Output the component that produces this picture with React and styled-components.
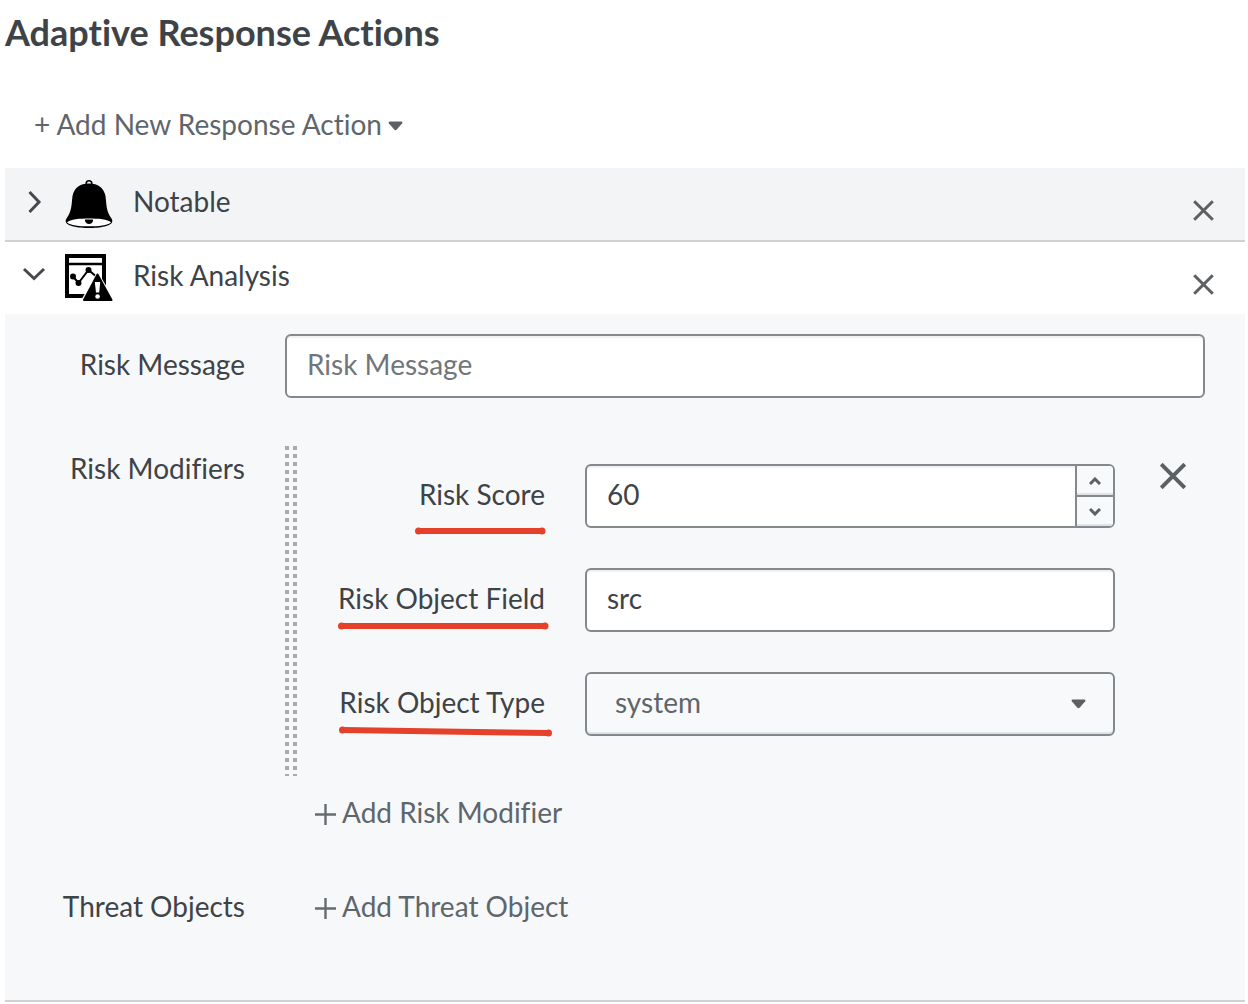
import React, { useState } from "react";
import styled, { createGlobalStyle, css } from "styled-components";

const GlobalStyle = createGlobalStyle`
  *, *::before, *::after { box-sizing: border-box; }
  body {
    margin: 0;
    background: #ffffff;
    color: #3e4347;
    font-family: Lato, "Liberation Sans", sans-serif;
    font-size: 28px;
    line-height: 36px;
    font-variant-ligatures: none;
  }
  button, input, select { font: inherit; font-variant-ligatures: none; color: inherit; margin: 0; }
`;

const Page = styled.main`
  padding: 12px 3px 0 5px;
`;

const Title = styled.h1`
  margin: 0;
  font-size: 36px;
  line-height: 40px;
  font-weight: 700;
`;

const AddActionButton = styled.button`
  display: flex;
  align-items: center;
  gap: 6px;
  margin: 54px 0 26px 29px;
  padding: 0;
  border: 0;
  background: none;
  color: #5f666b;
  cursor: pointer;
  & > svg { margin-top: 4px; }
`;

const ActionHeader = styled.div`
  display: flex;
  align-items: flex-start;
  height: ${(p) => (p.$open ? "72px" : "74px")};
  padding: 0 20px 0 12px;
  background: ${(p) => (p.$open ? "#ffffff" : "#f2f4f5")};
  border-bottom: ${(p) => (p.$open ? "0" : "2px solid #cfd1d3")};
`;

const ToggleButton = styled.button`
  display: flex;
  align-items: center;
  flex: 1;
  height: 72px;
  padding: 0;
  border: 0;
  background: none;
  text-align: left;
  cursor: pointer;
`;

const ChevronIcon = styled.svg`
  width: 34px;
  height: 34px;
  margin: 0 14px 4px 0;
  fill: none;
  stroke: #45494d;
  stroke-width: 3;
`;

const ActionIcon = styled.svg`
  width: 48px;
  height: 48px;
  margin-right: 20px;
`;

const ActionName = styled.span`
  padding-bottom: 6px;
`;

const RemoveButton = styled.button`
  display: grid;
  place-items: center;
  width: 44px;
  height: 44px;
  margin-top: 20px;
  padding: 0;
  border: 0;
  background: none;
  cursor: pointer;
`;

const Panel = styled.section`
  display: grid;
  grid-template-columns: 240px minmax(0, 1fr);
  gap: 40px;
  padding: 20px 40px 60px 0;
  background: #f7f8fa;
  border-bottom: 2px solid #cfd1d3;
`;

const labelText = css`
  line-height: 60px;
  text-align: right;
  white-space: nowrap;
`;

const Label = styled.label`
  ${labelText}
`;

const GroupLabel = styled.div`
  ${labelText}
`;

const TextInput = styled.input`
  display: block;
  width: 100%;
  min-width: 0;
  height: 64px;
  padding: 0 20px 4px;
  border: 2px solid #84898e;
  border-radius: 6px;
  background: #ffffff;
  box-shadow: inset 0 2px 1px #f0f1f3;
  &::placeholder { color: #70767c; opacity: 1; }
`;

const ModifierGroup = styled.div`
  display: flex;
  align-items: flex-start;
  margin-top: 8px;
`;

const DragHandle = styled.div`
  align-self: stretch;
  width: 12px;
  background: conic-gradient(at 4px 4px, transparent 270deg, #a9abae 0) 0 0 / 8px 8px;
`;

const ModifierFields = styled.div`
  display: grid;
  flex: 1;
  min-width: 0;
  gap: 40px;
  padding: 18px 0 40px;
`;

const Field = styled.div`
  display: grid;
  grid-template-columns: 248px minmax(0, 1fr);
  gap: 40px;
  height: 64px;
`;

const Marked = styled.span`
  position: relative;
  display: inline-block;
  line-height: 36px;
`;

const Underline = styled.svg`
  position: absolute;
  right: -8px;
  top: ${(p) => p.$top}px;
  overflow: visible;
  fill: #e5402a;
  stroke: #e5402a;
  stroke-width: 6;
`;

const NumberBox = styled.div`
  display: flex;
  height: 64px;
  border: 2px solid #84898e;
  border-radius: 6px;
  background: #ffffff;
  box-shadow: inset 0 2px 1px #f0f1f3;
  overflow: hidden;
`;

const NumberInput = styled.input`
  flex: 1;
  min-width: 0;
  padding: 0 20px 4px;
  border: 0;
  background: transparent;
  appearance: textfield;
  &::-webkit-inner-spin-button { appearance: none; margin: 0; }
`;

const Stepper = styled.div`
  display: grid;
  grid-template-rows: 29px 1fr;
  width: 38px;
  border-left: 2px solid #84898e;
`;

const StepButton = styled.button`
  display: grid;
  place-items: center;
  padding: 0;
  border: 0;
  background: #f7f9fb;
  box-shadow: inset 0 -2px 0 #dfe3e7;
  cursor: pointer;
  & + & { border-top: 2px solid #84898e; }
`;

const SelectBox = styled.div`
  display: grid;
  align-items: center;
  & > * { grid-area: 1 / 1; }
  & > svg { justify-self: end; margin-right: 29px; pointer-events: none; }
`;

const Select = styled.select`
  width: 100%;
  height: 64px;
  padding: 0 60px 4px 28px;
  border: 2px solid #84898e;
  border-radius: 6px;
  background: #f7f9fb;
  box-shadow: inset 0 -2px 0 #dfe3e7;
  color: #5f666b;
  appearance: none;
`;

const RemoveModifier = styled(RemoveButton)`
  width: 52px;
  height: 52px;
  margin: 4px 6px 0 32px;
`;

const AddLink = styled.button`
  display: flex;
  align-items: center;
  gap: 6px;
  height: ${(p) => p.$height}px;
  margin: ${(p) => p.$gap}px 0 0 30px;
  padding: 0 0 4px;
  border: 0;
  background: none;
  color: #5f666b;
  cursor: pointer;
  & > svg { margin-top: 5px; }
`;

function Cross({ size, weight }) {
  return (
    <svg width={size} height={size} viewBox={`0 0 ${size} ${size}`} stroke="#5c6063" strokeWidth={weight} aria-hidden="true">
      <path d={`M1.2 1.2 L${size - 1.2} ${size - 1.2} M${size - 1.2} 1.2 L1.2 ${size - 1.2}`} />
    </svg>
  );
}

function Caret() {
  return (
    <svg width="15" height="10" viewBox="0 0 15 10" fill="#5c6063" aria-hidden="true">
      <path d="M1.5 0.5H13.5Q15 0.8 14.2 2.2L8.8 8.6Q7.5 9.9 6.2 8.6L0.8 2.2Q0 0.8 1.5 0.5Z" />
    </svg>
  );
}

function Plus() {
  return (
    <svg width="21" height="21" viewBox="0 0 21 21" stroke="#666b6f" strokeWidth="2.4" aria-hidden="true">
      <path d="M10.5 0V21M0 10.5H21" />
    </svg>
  );
}

function Stroke({ top, width, x1, x2, slope = 0 }) {
  return (
    <Underline $top={top} width={width} height="6" aria-hidden="true">
      <path d={`M${x1} 3L${x2} ${3 + slope}`} />
      <circle cx={x1} cy="3" r="3.5" stroke="none" />
      <circle cx={x2} cy={3 + slope} r="3.5" stroke="none" />
    </Underline>
  );
}

function BellIcon() {
  return (
    <ActionIcon viewBox="0 0 48 48" aria-hidden="true">
      <circle cx="24" cy="3.6" r="2.8" fill="none" stroke="#000" strokeWidth="1.6" />
      <path d="M24 3.5C33 3.5 39 8 40.5 16C41.5 24 41 31 46.5 38.500C51 46 36 48 24 48S-3 46 1.500 38.500C7 31 6.500 24 7.500 16C9 8 15 3.500 24 3.500Z" />
      <path d="M2 42.500C5 39 15 38.500 24 38.500S43 39 46 42.500C43 45.500 33 46.300 24 46.300S5 45.500 2 42.500Z" fill="#fff" />
      <path d="M20 39.500H28V41Q27 44 24 44T20 41Z" />
    </ActionIcon>
  );
}

function RiskIcon() {
  return (
    <ActionIcon viewBox="0 0 48 48" aria-hidden="true">
      <rect x="2" y="2" width="37" height="40" fill="#fff" stroke="#000" strokeWidth="4" />
      <path d="M2 10H39" stroke="#000" strokeWidth="2.5" />
      <path d="M8 22.5L13.5 29L23.5 16L33 24" fill="none" stroke="#000" strokeWidth="2" />
      <circle cx="8" cy="22.5" r="3" />
      <circle cx="13.5" cy="29" r="3" />
      <circle cx="23.5" cy="16" r="3" />
      <path d="M32.5 21L47.5 47H18Z" stroke="#fff" strokeWidth="4" strokeLinejoin="round" />
      <path d="M32.5 20.5L46.5 46H19Z" stroke="#000" strokeWidth="2" strokeLinejoin="round" />
      <path d="M29.800 28H35.200L34.200 38.500H31Z" fill="#fff" />
      <circle cx="32.600" cy="42.500" r="2.300" fill="#fff" />
    </ActionIcon>
  );
}

export default function App() {
  const [score, setScore] = useState(60);
  return (
    <>
      <GlobalStyle />
      <Page>
        <Title>Adaptive Response Actions</Title>
        <AddActionButton type="button">
          <span>+ Add New Response Action</span>
          <Caret />
        </AddActionButton>

        <ActionHeader>
          <ToggleButton type="button" aria-expanded="false">
            <ChevronIcon viewBox="0 0 34 34"><path d="M12.5 7L22 17L12.5 27" /></ChevronIcon>
            <BellIcon />
            <ActionName>Notable</ActionName>
          </ToggleButton>
          <RemoveButton type="button" aria-label="Remove Notable"><Cross size={21} weight={3} /></RemoveButton>
        </ActionHeader>

        <ActionHeader $open>
          <ToggleButton type="button" aria-expanded="true">
            <ChevronIcon viewBox="0 0 34 34"><path d="M7 10L17 19.5L27 10" /></ChevronIcon>
            <RiskIcon />
            <ActionName>Risk Analysis</ActionName>
          </ToggleButton>
          <RemoveButton type="button" aria-label="Remove Risk Analysis"><Cross size={21} weight={3} /></RemoveButton>
        </ActionHeader>

        <Panel>
          <Label htmlFor="risk-message">Risk Message</Label>
          <TextInput id="risk-message" placeholder="Risk Message" />

          <GroupLabel id="modifiers-label">Risk Modifiers</GroupLabel>
          <div role="group" aria-labelledby="modifiers-label">
            <ModifierGroup>
              <DragHandle />
              <ModifierFields>
                <Field>
                  <Label htmlFor="risk-score">
                    <Marked>
                      Risk Score
                      <Stroke top={52} width={138} x1={3.5} x2={127} />
                    </Marked>
                  </Label>
                  <NumberBox>
                    <NumberInput id="risk-score" type="number" value={score} onChange={(e) => setScore(Number(e.target.value))} />
                    <Stepper>
                      <StepButton type="button" aria-label="Increase score" onClick={() => setScore(score + 1)}>
                        <svg width="12" height="8" viewBox="0 0 12 8" fill="none" stroke="#5c6063" strokeWidth="3"><path d="M1 7L6 2L11 7" /></svg>
                      </StepButton>
                      <StepButton type="button" aria-label="Decrease score" onClick={() => setScore(score - 1)}>
                        <svg width="12" height="8" viewBox="0 0 12 8" fill="none" stroke="#5c6063" strokeWidth="3"><path d="M1 1L6 6L11 1" /></svg>
                      </StepButton>
                    </Stepper>
                  </NumberBox>
                </Field>
                <Field>
                  <Label htmlFor="object-field">
                    <Marked>
                      Risk Object Field
                      <Stroke top={43} width={216} x1={4.5} x2={208} />
                    </Marked>
                  </Label>
                  <TextInput id="object-field" defaultValue="src" />
                </Field>
                <Field>
                  <Label htmlFor="object-type">
                    <Marked>
                      Risk Object Type
                      <Stroke top={43} width={216} x1={5.5} x2={211.5} slope={3} />
                    </Marked>
                  </Label>
                  <SelectBox>
                    <Select id="object-type" defaultValue="system">
                      <option value="system">system</option>
                      <option value="user">user</option>
                    </Select>
                    <Caret />
                  </SelectBox>
                </Field>
              </ModifierFields>
              <RemoveModifier type="button" aria-label="Remove risk modifier"><Cross size={26} weight={4} /></RemoveModifier>
            </ModifierGroup>
            <AddLink type="button" $height={44} $gap={16}>
              <Plus />
              Add Risk Modifier
            </AddLink>
          </div>

          <GroupLabel>Threat Objects</GroupLabel>
          <AddLink type="button" $height={64} $gap={0}>
            <Plus />
            Add Threat Object
          </AddLink>
        </Panel>
      </Page>
    </>
  );
}
